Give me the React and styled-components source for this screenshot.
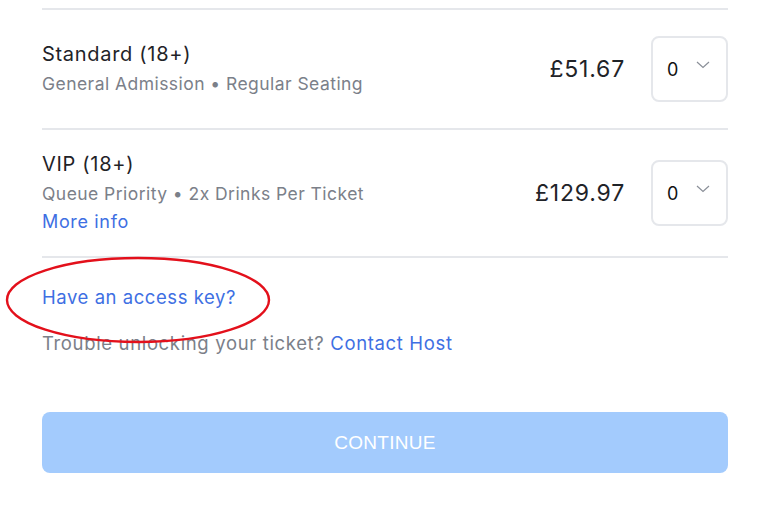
import React from "react";
import styled, { createGlobalStyle } from "styled-components";

const GlobalStyle = createGlobalStyle`
  body {
    margin: 0;
    background: #ffffff;
    font-family: Inter, "Noto Sans", "Liberation Sans", sans-serif;
    -webkit-font-smoothing: antialiased;
  }
`;

const tickets = [
  {
    name: "Standard (18+)",
    details: "General Admission • Regular Seating",
    price: "£51.67",
  },
  {
    name: "VIP (18+)",
    details: "Queue Priority • 2x Drinks Per Ticket",
    price: "£129.97",
    more: true,
  },
];

export default function App() {
  return (
    <Page>
      <GlobalStyle />
      <List>
        {tickets.map((t) => (
          <Row key={t.name}>
            <Info>
              <Name>{t.name}</Name>
              <Details>{t.details}</Details>
              {t.more && <Link href="#">More info</Link>}
            </Info>
            <Price>{t.price}</Price>
            <Select>
              <span>0</span>
              <svg width="14" height="8" viewBox="0 0 14 8" fill="none">
                <path d="M1 1l6 5.5L13 1" stroke="#8a8f98" strokeWidth="1.2" />
              </svg>
            </Select>
          </Row>
        ))}
      </List>
      <AccessKey href="#">Have an access key?</AccessKey>
      <Trouble>
        Trouble unlocking your ticket? <Link href="#">Contact Host</Link>
      </Trouble>
      <Continue disabled>CONTINUE</Continue>
      <Circle width="270" height="92" viewBox="0 0 270 92">
        <ellipse cx="135" cy="46" rx="131" ry="42" fill="none" stroke="#e3101b" strokeWidth="2.4" />
      </Circle>
    </Page>
  );
}

const Page = styled.div`
  position: relative;
  padding: 8px 42px 40px;
  width: 686px;
`;

const List = styled.div`
  display: flex;
  flex-direction: column;
  border-top: 2px solid #e5e7eb;
`;

const Row = styled.div`
  display: flex;
  align-items: center;
  padding: 20px 0;
  border-bottom: 2px solid #e5e7eb;
`;

const Info = styled.div`
  flex: 1;
  display: flex;
  flex-direction: column;
`;

const Name = styled.div`
  font-size: 20px;
  line-height: 28px;
  letter-spacing: 0.7px;
  color: #1f2328;
  margin-bottom: 2px;
`;

const Details = styled.div`
  font-size: 17.5px;
  line-height: 28px;
  letter-spacing: 0.45px;
  color: #7b8089;
`;

const Link = styled.a`
  color: #3e6fe3;
  text-decoration: none;
  font-size: 18px;
  line-height: 28px;
  letter-spacing: 0.65px;
`;

const Price = styled.div`
  font-size: 23px;
  letter-spacing: 0.8px;
  color: #1f2328;
  margin-right: 26px;
`;

const Select = styled.div`
  box-sizing: border-box;
  width: 77px;
  height: 66px;
  margin: 6px 0;
  border: 2px solid #e5e7eb;
  border-radius: 8px;
  display: flex;
  align-items: center;
  justify-content: space-between;
  padding: 0 16px 8px 14px;
  font-size: 18px;
  color: #111;
  span {
    padding-top: 8px;
  }
`;

const AccessKey = styled(Link)`
  display: block;
  margin-top: 25px;
  font-size: 18.5px;
  letter-spacing: 0.55px;
`;

const Trouble = styled.div`
  margin-top: 18px;
  font-size: 18.5px;
  line-height: 28px;
  letter-spacing: 0.65px;
  color: #7b8089;
  ${Link} {
    font-size: 18.5px;
    letter-spacing: 0.65px;
  }
`;

const Continue = styled.button`
  display: block;
  width: 100%;
  height: 61px;
  margin-top: 55px;
  border: none;
  border-radius: 8px;
  background: #a3cbfd;
  color: #ffffff;
  font-family: "Liberation Sans", Arial, sans-serif;
  font-size: 19px;
  letter-spacing: 0.3px;
`;

const Circle = styled.svg`
  position: absolute;
  left: 3px;
  top: 254px;
  pointer-events: none;
`;
